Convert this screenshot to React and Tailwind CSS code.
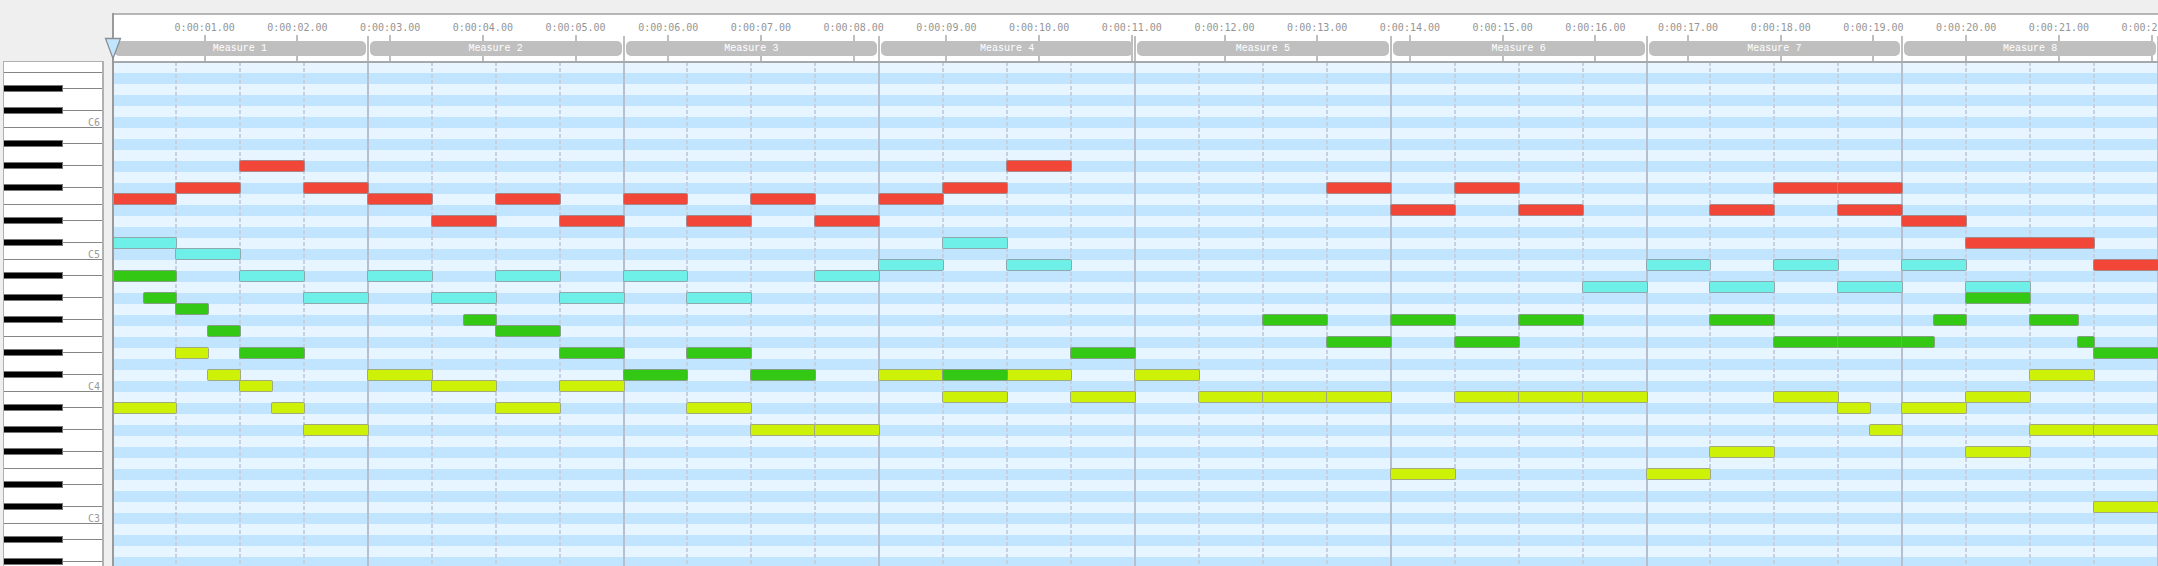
const OCTAVE = [
  ["B", "h-[16px]", true],
  ["A", "h-[22px]", true],
  ["G", "h-[22px]", true],
  ["F", "h-[17px]", false],
  ["E", "h-[16px]", true],
  ["D", "h-[22px]", true],
  ["C", "h-[17px]", false],
];

const BEATS = 32;
const TICKS_PER_BEAT = 4;
const BEATS_PER_SECOND = 1.45;

// Each note: [start beat, length in beats, row from the top]
const TRACKS = [
  {
    name: "red",
    color: "bg-[#f24738]",
    notes: [
      [0, 1, 12], [1, 1, 11], [2, 1, 9], [3, 1, 11], [4, 1, 12], [5, 1, 14], [6, 1, 12], [7, 1, 14],
      [8, 1, 12], [9, 1, 14], [10, 1, 12], [11, 1, 14], [12, 1, 12], [13, 1, 11], [14, 1, 9],
      [19, 1, 11], [20, 1, 13], [21, 1, 11], [22, 1, 13], [25, 1, 13], [26, 1, 11], [27, 1, 11],
      [27, 1, 13], [28, 1, 14], [29, 2, 16], [31, 1, 18],
    ],
  },
  {
    name: "cyan",
    color: "bg-[#6ef0e8]",
    notes: [
      [0, 1, 16], [1, 1, 17], [2, 1, 19], [3, 1, 21], [4, 1, 19], [5, 1, 21], [6, 1, 19], [7, 1, 21],
      [8, 1, 19], [9, 1, 21], [11, 1, 19], [12, 1, 18], [13, 1, 16], [14, 1, 18], [23, 1, 20],
      [24, 1, 18], [25, 1, 20], [26, 1, 18], [27, 1, 20], [28, 1, 18], [29, 1, 20],
    ],
  },
  {
    name: "yellow",
    color: "bg-[#cdf207]",
    notes: [
      [0, 1, 31], [1, 0.5, 26], [1.5, 0.5, 28], [2, 0.5, 29], [2.5, 0.5, 31], [3, 1, 33], [4, 1, 28],
      [5, 1, 29], [6, 1, 31], [7, 1, 29], [9, 1, 31], [10, 1, 33], [11, 1, 33], [12, 1, 28],
      [13, 1, 30], [14, 1, 28], [15, 1, 30], [16, 1, 28], [17, 1, 30], [18, 1, 30], [19, 1, 30],
      [20, 1, 37], [21, 1, 30], [22, 1, 30], [23, 1, 30], [24, 1, 37], [25, 1, 35], [26, 1, 30],
      [27, 0.5, 31], [27.5, 0.5, 33], [28, 1, 31], [29, 1, 30], [29, 1, 35], [30, 1, 28],
      [30, 1, 33], [31, 1, 33], [31, 1, 40],
    ],
  },
  {
    name: "green",
    color: "bg-[#32c814]",
    notes: [
      [0, 1, 19], [0.5, 0.5, 21], [1, 0.5, 22], [1.5, 0.5, 24], [2, 1, 26], [5.5, 0.5, 23], [6, 1, 24],
      [7, 1, 26], [8, 1, 28], [9, 1, 26], [10, 1, 28], [13, 1, 28], [15, 1, 26], [18, 1, 23],
      [19, 1, 25], [20, 1, 23], [21, 1, 25], [22, 1, 23], [25, 1, 23], [26, 1, 25], [27, 1, 25],
      [28, 0.5, 25], [28.5, 0.5, 23], [29, 1, 21], [30, 0.75, 23], [30.75, 0.25, 25], [31, 1, 26],
    ],
  },
];

const range = (n) => Array.from({ length: n }, (_, i) => i);

function Key({ height, black, label }) {
  return (
    <div className={`relative shrink-0 border-b border-[#858585] ${height}`}>
      {label && (
        <span className="absolute right-[2px] bottom-0 text-[10px] leading-[8px] text-[#9a9a9a]">{label}</span>
      )}
      {black && (
        <div className="absolute left-0 -bottom-[4px] z-10 h-[7px] w-[59px] border-y border-r border-[#777777] bg-black" />
      )}
    </div>
  );
}

function Keyboard() {
  return (
    <div className="ml-[3px] flex w-[101px] shrink-0 flex-col overflow-hidden border-x border-t border-r-2 border-[#b0b0b0] bg-white font-['DejaVu_Sans_Mono',monospace]">
      <Key height="h-[11px]" />
      {OCTAVE.slice(4).map(([n, h, b]) => (
        <Key key={n} height={h} black={b} label={n === "C" ? "C6" : null} />
      ))}
      {[5, 4, 3].map((o) =>
        OCTAVE.map(([n, h, b]) => (
          <Key key={n + o} height={h} black={b} label={n === "C" ? `C${o}` : null} />
        ))
      )}
      {OCTAVE.slice(0, 2).map(([n, h, b]) => (
        <Key key={n} height={h} black={b} />
      ))}
    </div>
  );
}

function Ruler() {
  return (
    <div className="relative z-10 -mb-px h-[50px] shrink-0 overflow-hidden border-t-2 border-b-2 border-t-[#b6b6b6] border-b-[#a6a9ac] bg-white">
      <div className="absolute inset-y-0 right-0 -left-[2px]">
        {range(22).map((i) => {
          const s = i + 1;
          return (
            <div
              key={s}
              className="absolute top-0 -ml-[30px] flex h-full w-[60px] flex-col items-center"
              style={{ left: `${(s * BEATS_PER_SECOND * 100) / BEATS}%` }}
            >
              <span className="h-[20px] pt-[6px] font-['DejaVu_Sans_Mono',monospace] text-[10px] leading-[13px] text-[#959595]">
                {`0:00:${String(s).padStart(2, "0")}.00`}
              </span>
              <span className="w-[2px] flex-1 bg-[#bebebe]" />
            </div>
          );
        })}
      </div>
      <div className="relative -mx-px grid h-full grid-cols-8 pt-[21px]">
        {range(8).map((m) => (
          <div key={m} className="border-r-2 border-[#bebebe]">
            <div className="mx-px mt-[5px] h-[15px] rounded-[5px] bg-[#bfbfbf] text-center text-[10px] leading-[16px] text-white">
              Measure {m + 1}
            </div>
          </div>
        ))}
      </div>
    </div>
  );
}

function Grid() {
  return (
    <div className="relative min-h-0 flex-1 overflow-hidden bg-[repeating-linear-gradient(to_bottom,#e6f5ff_0px,#e6f5ff_11px,#c2e5ff_11px,#c2e5ff_22px)]">
      <div className="absolute inset-y-0 -inset-x-px grid grid-cols-[repeat(32,minmax(0,1fr))]">
        {range(BEATS).map((b) =>
          b % 4 === 3 ? (
            <div key={b} className="border-r-2 border-[#b6bfce]" />
          ) : (
            <div key={b} className="flex justify-end">
              <div className="w-[2px] bg-[repeating-linear-gradient(to_bottom,#c6d0de_0px,#c6d0de_4px,transparent_4px,transparent_6px)]" />
            </div>
          )
        )}
      </div>
      <div className="relative -mx-px grid auto-rows-[11px] grid-cols-[repeat(128,minmax(0,1fr))]">
        {TRACKS.map((t) =>
          t.notes.map(([start, len, row]) => (
            <div
              key={`${t.name}-${start}-${row}`}
              className={`-mt-px -ml-[2px] rounded-[2px] border border-[#96969f]/80 ${t.color}`}
              style={{
                gridColumn: `${start * TICKS_PER_BEAT + 1} / span ${len * TICKS_PER_BEAT}`,
                gridRow: row + 1,
              }}
            />
          ))
        )}
      </div>
    </div>
  );
}

export default function App() {
  return (
    <main className="flex h-screen flex-col overflow-hidden bg-[#efefef] pt-[13px] font-['Liberation_Mono',monospace]">
      <div className="flex min-h-0 flex-1">
        <div className="flex pt-[48px]">
          <Keyboard />
        </div>
        <div className="relative ml-[8px] flex min-w-0 flex-1 flex-col border-l-2 border-[#9a9a9a]">
          <Ruler />
          <Grid />
          <svg className="absolute top-[24px] -left-[10px] z-20" width="18" height="23" viewBox="0 0 18 23" aria-label="Playhead">
            <path d="M1.5 1.5H16.5L9 21.5Z" fill="#c2e5ff" stroke="#8a8f94" strokeWidth="1.3" />
          </svg>
        </div>
      </div>
    </main>
  );
}
